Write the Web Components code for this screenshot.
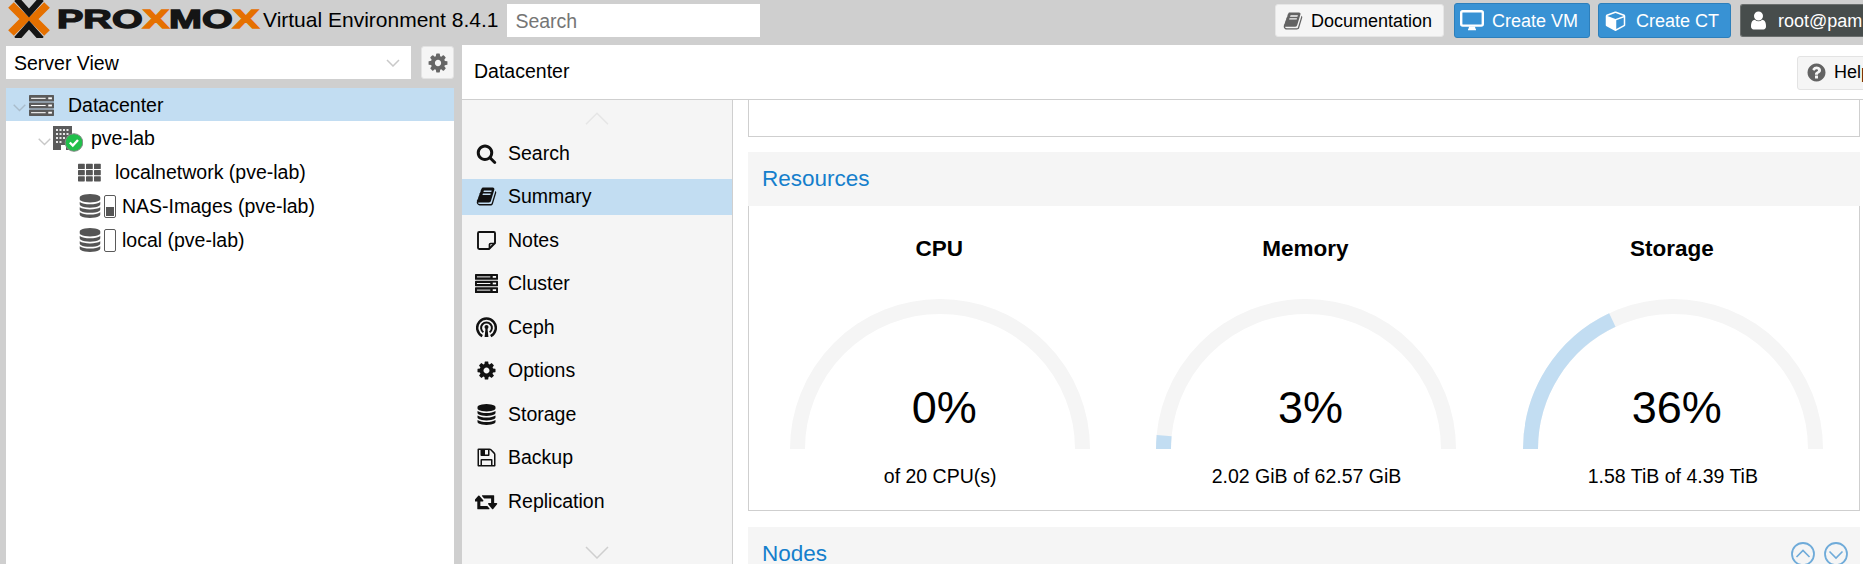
<!DOCTYPE html>
<html lang="en">
<head>
<meta charset="utf-8">
<title>Proxmox Virtual Environment</title>
<style>
  html, body { margin: 0; width: 1863px; height: 564px; overflow: hidden; background: #cfcfcf; }
  body { font: 19.5px "Liberation Sans", Arial, sans-serif; color: #000; }
</style>
</head>
<body>
<pve-app>
  <pve-topbar slot="top">
    <pve-logo></pve-logo>
    <pve-version>Virtual Environment 8.4.1</pve-version>
    <pve-search>Search</pve-search>
    <pve-button icon="book" variant="plain" style="--pl:7px;--gap:8px;--w:169px;--is:20px">Documentation</pve-button>
    <pve-button icon="desktop" variant="blue" style="--pl:5px;--gap:8px;--w:136px;--is:24px;margin-left:1px">Create VM</pve-button>
    <pve-button icon="cube" variant="blue" style="--pl:6px;--gap:10px;--w:133px;--is:21px;margin-left:-1px">Create CT</pve-button>
    <pve-button icon="user" variant="dark" style="--pl:7px;--gap:9px;--w:123px;--is:21px">root@pam</pve-button>
  </pve-topbar>

  <pve-sidebar slot="side">
    <pve-viewbar>Server View</pve-viewbar>
    <pve-tree>
      <pve-tree-row selected style="--pad:7px;--tx:14px">
        <pve-chev></pve-chev><pve-icon name="server" style="--s:25px;--c:#5a5a5a;margin-left:3px;margin-top:1px"></pve-icon>
        <span>Datacenter</span>
      </pve-tree-row>
      <pve-tree-row style="--pad:32px;--tx:8px">
        <pve-chev></pve-chev><pve-node-icon style="margin-left:2px;margin-top:1px"></pve-node-icon>
        <span>pve-lab</span>
      </pve-tree-row>
      <pve-tree-row style="--pad:71px;--tx:13px">
        <pve-icon name="th" style="--s:25px;--c:#555"></pve-icon>
        <span>localnetwork (pve-lab)</span>
      </pve-tree-row>
      <pve-tree-row style="--pad:72px;--tx:6px">
        <pve-icon name="database" style="--s:24px;--c:#555"></pve-icon><pve-level value="9" style="margin-left:2px"></pve-level>
        <span>NAS-Images (pve-lab)</span>
      </pve-tree-row>
      <pve-tree-row style="--pad:72px;--tx:6px">
        <pve-icon name="database" style="--s:24px;--c:#555"></pve-icon><pve-level value="0" style="margin-left:2px"></pve-level>
        <span>local (pve-lab)</span>
      </pve-tree-row>
    </pve-tree>
  </pve-sidebar>

  <pve-content slot="main">
    <pve-crumb>Datacenter</pve-crumb>
    <pve-split>
      <pve-menu>
        <pve-menu-item icon="search">Search</pve-menu-item>
        <pve-menu-item icon="book" selected>Summary</pve-menu-item>
        <pve-menu-item icon="note">Notes</pve-menu-item>
        <pve-menu-item icon="server" wide>Cluster</pve-menu-item>
        <pve-menu-item icon="ceph">Ceph</pve-menu-item>
        <pve-menu-item icon="cog">Options</pve-menu-item>
        <pve-menu-item icon="database">Storage</pve-menu-item>
        <pve-menu-item icon="floppy">Backup</pve-menu-item>
        <pve-menu-item icon="retweet" wide>Replication</pve-menu-item>
      </pve-menu>
      <pve-scroll>
        <pve-stub></pve-stub>
        <pve-panel>
          <span slot="title">Resources</span>
          <pve-gauge title="CPU" pct="0" sub="of 20 CPU(s)"></pve-gauge>
          <pve-gauge title="Memory" pct="3" sub="2.02 GiB of 62.57 GiB"></pve-gauge>
          <pve-gauge title="Storage" pct="36" sub="1.58 TiB of 4.39 TiB"></pve-gauge>
        </pve-panel>
        <pve-panel-head>
          <span>Nodes</span>
          <pve-tool dir="up" slot="tools"></pve-tool>
          <pve-tool dir="down" slot="tools"></pve-tool>
        </pve-panel-head>
      </pve-scroll>
    </pve-split>
  </pve-content>
</pve-app>

<script>
const ICONS = {
  search: ['0 0 1792 1792','<path fill="currentColor" d="M1216 832q0-185-131.5-316.5t-316.5-131.5-316.5 131.5-131.5 316.5 131.5 316.5 316.5 131.5 316.5-131.5 131.5-316.5zm512 832q0 52-38 90t-90 38q-54 0-90-38l-343-342q-179 124-399 124-143 0-273.5-55.5t-225-150-150-225-55.5-273.5 55.5-273.5 150-225 225-150 273.5-55.5 273.5 55.5 225 150 150 225 55.5 273.5q0 220-124 399l343 343q37 37 37 90z"/>'],
  cog: ['0 0 1792 1792','<path fill="currentColor" d="M1152 896q0-106-75-181t-181-75-181 75-75 181 75 181 181 75 181-75 75-181zm512-109v222q0 12-8 23t-20 13l-185 28q-19 54-39 91 35 50 107 138 10 12 10 25t-9 23q-27 37-99 108t-94 71q-12 0-26-9l-138-108q-44 23-91 38-16 136-29 186-7 28-36 28h-222q-14 0-24.5-8.5t-11.5-21.5l-28-184q-49-16-90-37l-141 107q-10 9-25 9-14 0-25-11-126-114-165-168-7-10-7-23 0-12 8-23 15-21 51-66.5t54-70.5q-27-50-41-99l-183-27q-13-2-21-12.5t-8-23.5v-222q0-12 8-23t19-13l186-28q14-46 39-92-40-57-107-138-10-12-10-24 0-10 9-23 26-36 98.5-107.5t94.5-71.5q13 0 26 10l138 107q44-23 91-38 16-136 29-186 7-28 36-28h222q14 0 24.5 8.5t11.5 21.5l28 184q49 16 90 37l142-107q9-9 24-9 13 0 25 10 129 119 165 170 7 8 7 22 0 12-8 23-15 21-51 66.5t-54 70.5q26 50 41 98l183 28q13 2 21 12.5t8 23.5z"/>'],
  book: ['0 0 1792 1792','<path fill="currentColor" d="M1703 478q40 57 18 129l-275 906q-19 64-76.5 107.5t-122.5 43.5h-923q-77 0-148.5-53.5t-99.5-131.5q-24-67-2-127 0-4 3-27t4-37q1-8-3-21.5t-3-19.5q2-11 8-21t16.5-23.5 16.5-23.5q23-38 45-91.5t30-91.5q3-10 .5-30t-.5-28q3-11 17-28t17-23q21-36 42-92t25-90q1-9-2.5-32t.5-28q4-13 22-30.5t22-22.5q19-26 42.5-84.5t27.5-96.5q1-8-3-25.5t-2-26.5q2-8 9-18t18-23 17-21q8-12 16.5-30.5t15-35 16-36 19.5-32 26.5-23.5 36-11.5 47.5 5.5l-1 3q38-9 51-9h761q74 0 114 56t18 130l-274 906q-36 119-71.5 153.5t-128.5 34.5h-869q-27 0-38 15-11 16-1 43 24 70 144 70h923q29 0 56-15.5t35-41.5l300-987q7-22 5-57 38 15 59 43zm-1064 2q-4 13 2 22.5t20 9.5h608q13 0 25.5-9.5t16.5-22.5l21-64q4-13-2-22.5t-20-9.5h-608q-13 0-25.5 9.5t-16.5 22.5zm-83 256q-4 13 2 22.5t20 9.5h608q13 0 25.5-9.5t16.5-22.5l21-64q4-13-2-22.5t-20-9.5h-608q-13 0-25.5 9.5t-16.5 22.5z"/>'],
  database: ['0 0 1792 1792','<path fill="currentColor" d="M896 768q237 0 443-43t325-127v170q0 69-103 128t-280 93.5-385 34.5-385-34.5-280-93.5-103-128v-170q119 84 325 127t443 43zm0 768q237 0 443-43t325-127v170q0 69-103 128t-280 93.5-385 34.5-385-34.5-280-93.5-103-128v-170q119 84 325 127t443 43zm0-384q237 0 443-43t325-127v170q0 69-103 128t-280 93.5-385 34.5-385-34.5-280-93.5-103-128v-170q119 84 325 127t443 43zm0-1152q208 0 385 34.5t280 93.5 103 128v128q0 69-103 128t-280 93.5-385 34.5-385-34.5-280-93.5-103-128v-128q0-69 103-128t280-93.5 385-34.5z"/>'],
  user: ['0 0 1792 1792','<path fill="currentColor" d="M1536 1399q0 109-62.5 187t-150.5 78h-854q-88 0-150.5-78t-62.5-187q0-85 8.5-160.5t31.5-152 58.5-131 94-89 134.5-34.5q131 128 313 128t313-128q76 0 134.5 34.5t94 89 58.5 131 31.5 152 8.5 160.5zm-256-887q0 159-112.5 271.5t-271.5 112.5-271.5-112.5-112.5-271.5 112.5-271.5 271.5-112.5 271.5 112.5 112.5 271.5z"/>'],
  cube: ['0 0 1664 1792','<path fill="currentColor" d="M896 1629l640-349v-636l-640 233v752zm-64-865l698-254-698-254-698 254zm832-252v768q0 35-18 65t-49 47l-704 384q-28 16-61 16t-61-16l-704-384q-31-17-49-47t-18-65v-768q0-40 23-73t61-47l704-256q22-8 44-8t44 8l704 256q38 14 61 47t23 73z"/>'],
  help: ['0 0 1792 1792','<path fill="currentColor" d="M1024 1376v-192q0-14-9-23t-23-9h-192q-14 0-23 9t-9 23v192q0 14 9 23t23 9h192q14 0 23-9t9-23zm256-672q0-88-55.5-163t-138.5-116-170-41q-243 0-371 213-15 24 8 42l132 100q7 6 19 6 16 0 25-12 53-68 86-92 34-24 86-24 48 0 85.5 26t37.5 59q0 38-20 61t-68 45q-63 28-115.5 86.5t-52.5 125.5v36q0 14 9 23t23 9h192q14 0 23-9t9-23q0-19 21.5-49.5t54.5-49.5q32-18 49-28.5t46-35 44.5-48 28-60.5 12.5-81zm384 192q0 209-103 385.5t-279.5 279.5-385.5 103-385.5-103-279.5-279.5-103-385.5 103-385.5 279.5-279.5 385.5-103 385.5 103 279.5 279.5 103 385.5z"/>'],
  floppy: ['0 0 1792 1792','<path fill="currentColor" d="M512 1536h768v-384h-768v384zm896 0h128v-896q0-14-10-38.5t-20-34.5l-281-281q-10-10-34-20t-39-10v416q0 40-28 68t-68 28h-576q-40 0-68-28t-28-68v-416h-128v1280h128v-416q0-40 28-68t68-28h832q40 0 68 28t28 68v416zm-384-928v-320q0-13-9.5-22.5t-22.5-9.5h-192q-13 0-22.5 9.5t-9.5 22.5v320q0 13 9.5 22.5t22.5 9.5h192q13 0 22.5-9.5t9.5-22.5zm640 32v928q0 40-28 68t-68 28h-1344q-40 0-68-28t-28-68v-1344q0-40 28-68t68-28h928q40 0 88 20t76 48l280 280q28 28 48 76t20 88z"/>'],
  retweet: ['0 0 1920 1792','<path fill="currentColor" d="M1216 1504q0 13-9.5 22.5t-22.5 9.5h-960q-8 0-13.5-2t-9-7-5.5-8-3-11.5-1-11.5v-600h-192q-26 0-45-19t-19-45q0-24 15-41l320-384q19-22 49-22t49 22l320 384q15 17 15 41 0 26-19 45t-45 19h-192v384h576q16 0 25 11l160 192q7 10 7 21zm640-416q0 24-15 41l-320 384q-20 23-49 23t-49-23l-320-384q-15-17-15-41 0-26 19-45t45-19h192v-384h-576q-16 0-25-12l-160-192q-7-9-7-20 0-13 9.5-22.5t22.5-9.5h960q8 0 13.5 2t9 7 5.5 8 3 11.5 1 11.5v600h192q26 0 45 19t19 45z"/>'],
  desktop: ['0 0 24 22','<rect x="1.2" y="1.2" width="21.6" height="14.4" rx="1.5" fill="none" stroke="currentColor" stroke-width="2.4"/><path fill="currentColor" d="M9 16.500h6c0 1.400.8 2.300 1 3v.8H8v-.8c.3-.7 1-1.600 1-3z"/>'],
  note: ['0 0 21 21','<path fill="none" stroke="currentColor" stroke-width="1.9" d="M3.2 2h14.6c.7 0 1.2.5 1.2 1.2V13l-6 6H3.2C2.500 19 2 18.500 2 17.800V3.200C2 2.500 2.500 2 3.200 2z"/><path fill="none" stroke="currentColor" stroke-width="1.7" d="M18.500 13.500h-4a1 1 0 0 0-1 1v4"/>'],
  server: ['0 0 24 22','<g fill="currentColor"><rect x="0" y="1" width="24" height="6.200" rx=".6"/><rect x="0" y="8.200" width="24" height="5.600" rx=".6"/><rect x="0" y="14.800" width="24" height="6.200" rx=".6"/></g><g fill="#fff"><rect x="2" y="3.600" width="14" height="1"/><rect x="18.500" y="3.200" width="3.500" height="1.800"/><rect x="2" y="10.500" width="14" height="1"/><rect x="18.500" y="10.100" width="3.500" height="1.800"/><rect x="2" y="17.400" width="14" height="1"/><rect x="18.500" y="17" width="3.500" height="1.800"/></g>'],
  th: ['0 0 25 21','<g fill="currentColor"><rect x="1" y="1.800" width="6.800" height="5.200" rx=".6"/><rect x="9" y="1.800" width="6.800" height="5.200" rx=".6"/><rect x="17" y="1.800" width="6.800" height="5.200" rx=".6"/><rect x="1" y="8" width="6.800" height="5.200" rx=".6"/><rect x="9" y="8" width="6.800" height="5.200" rx=".6"/><rect x="17" y="8" width="6.800" height="5.200" rx=".6"/><rect x="1" y="14.200" width="6.800" height="5.200" rx=".6"/><rect x="9" y="14.200" width="6.800" height="5.200" rx=".6"/><rect x="17" y="14.200" width="6.800" height="5.200" rx=".6"/></g>'],
  ceph: ['0 0 21 21','<g fill="none" stroke="currentColor"><path stroke-width="2.500" d="M6.300 19.200a9.300 9.300 0 1 1 8.400 0"/><path stroke-width="2" d="M7.400 15.300a5.400 5.400 0 1 1 6.200 0"/></g><path fill="currentColor" d="M8.600 20l1-9.500a1 1 0 0 1 1.800 0l1 9.500z"/><circle cx="10.500" cy="10" r="2" fill="currentColor"/>']
};

function define(name, html, setup) {
  customElements.define(name, class extends HTMLElement {
    constructor() {
      super();
      this.attachShadow({ mode: 'open' }).innerHTML = typeof html === 'function' ? html(this) : html;
    }
    connectedCallback() { if (setup) setup(this, this.shadowRoot); }
  });
}

define('pve-icon', `<style>
  :host { display: inline-flex; width: var(--s, 21px); height: var(--s, 21px); color: var(--c, currentColor); flex: none; align-items: center; justify-content: center; }
  svg { width: 100%; height: 100%; display: block; }
</style><svg></svg>`, (el, root) => {
  const [vb, body] = ICONS[el.getAttribute('name')];
  const svg = root.querySelector('svg');
  svg.setAttribute('viewBox', vb);
  svg.innerHTML = body;
});

define('pve-app', `<style>
  :host { display: grid; grid-template-rows: 45px 519px; grid-template-columns: 462px 1401px; width: 1863px; height: 564px; overflow: hidden; background: #cfcfcf; }
  ::slotted([slot=top]) { grid-column: 1 / 3; }
</style><slot name="top"></slot><slot name="side"></slot><slot name="main"></slot>`);

define('pve-topbar', `<style>
  :host { display: flex; align-items: center; gap: 9px; background: #cfcfcf; height: 45px; overflow: hidden; }
  ::slotted(pve-search) { margin-right: auto; }
</style><slot></slot>`);

define('pve-logo', `<style>
  :host { display: flex; align-items: center; width: 258px; height: 45px; flex: none; margin-right: -4px; padding-left: 8px; box-sizing: border-box; align-self: flex-start; }
  svg { width: 42px; height: 38px; flex: none; display: block; margin-top: -7px; }
  .w { display: block; width: 133px; margin-left: 7px; margin-top: -8px; font: bold 26px/30px "Liberation Sans", Arial, sans-serif; color: #151515; -webkit-text-stroke: 1.3px #151515; transform: scaleX(1.52); transform-origin: 0 50%; white-space: nowrap; }
  b { color: #e57000; -webkit-text-stroke: 1.3px #e57000; font-weight: bold; }
</style>
<svg viewBox="0 0 42 38">
  <g fill="none" stroke-linejoin="miter">
    <path stroke="#e57000" stroke-width="8" d="M3 5 L17 19 L3 33"/>
    <path stroke="#e57000" stroke-width="8" d="M39 5 L25 19 L39 33"/>
    <path stroke="#151515" stroke-width="6" d="M8.500 -1 L21 13 L33.500 -1"/>
    <path stroke="#151515" stroke-width="6" d="M8.500 39 L21 25 L33.500 39"/>
  </g>
</svg>
<span class="w">PRO<b>X</b>MO<b>X</b></span>`);

define('pve-version', `<style>
  :host { display: block; font-size: 21px; flex: none; margin-left: 0; margin-top: -5px; white-space: nowrap; }
</style><slot></slot>`);

define('pve-search', `<style>
  :host { display: flex; align-items: center; flex: none; width: 253px; height: 33px; box-sizing: border-box; padding: 2px 0 0 8px; background: #fff; color: #757575; font-size: 19.5px; margin-left: 0; margin-top: -4px; }
</style><slot></slot>`);

define('pve-button', (el) => `<style>
  :host { display: flex; align-items: center; flex: none; box-sizing: border-box; width: var(--w); height: 33px; padding-left: var(--pl); gap: var(--gap); font-size: 18px; border-radius: 3px; white-space: nowrap; margin-top: -4px; }
  :host([variant=plain]) { background: #f5f5f5; border: 1px solid #e6e6e6; color: #000; --ic: #636363; }
  :host([variant=blue]) { background: #3892d4; border: 1px solid #2d7fbb; color: #fff; --ic: #fff; height: 35px; margin-top: -4px; }
  :host([variant=dark]) { background: #474d4c; border: 1px solid #6a6e6d; border-right: 0; border-radius: 3px 0 0 3px; color: #fff; --ic: #fff; }
  span { padding-top: 1px; }
</style><pve-icon name="${el.getAttribute('icon')}" style="--s:var(--is);--c:var(--ic)"></pve-icon><span><slot></slot></span>`);

define('pve-sidebar', `<style>
  :host { display: flex; flex-direction: column; box-sizing: border-box; width: 462px; height: 519px; padding: 1px 8px 0 6px; gap: 9px; background: #cfcfcf; }
</style><slot></slot>`);

define('pve-viewbar', `<style>
  :host { display: flex; gap: 10px; height: 33px; flex: none; }
  .sel { flex: 1; background: #fff; display: flex; align-items: center; justify-content: space-between; padding: 0 11px 0 9px; }
  .sel span { padding-top: 1px; margin-left: -1px; }
  svg.ch { width: 14px; height: 8px; }
  .gear { width: 33px; box-sizing: border-box; background: #f5f5f5; border: 1px solid #e3e3e3; border-radius: 3px; display: flex; align-items: center; justify-content: center; }
</style>
<div class="sel"><span><slot></slot></span>
  <svg class="ch" viewBox="0 0 14 8"><path d="M1 1l6 6 6-6" fill="none" stroke="#c9c9c9" stroke-width="1.500"/></svg></div>
<div class="gear"><pve-icon name="cog" style="--s:22px;--c:#666"></pve-icon></div>`);

define('pve-tree', `<style>
  :host { display: block; flex: 1; background: #fff; }
</style><slot></slot>`);

define('pve-tree-row', `<style>
  :host { display: flex; align-items: center; height: 34px; box-sizing: border-box; padding-left: var(--pad); white-space: nowrap; }
  :host([selected]) { background: #c2ddf2; height: 33px; --ch: #a9bccb; }
  ::slotted(span) { margin-left: var(--tx); margin-top: 1px; }
</style><slot></slot>`);

define('pve-chev', `<style>
  :host { display: block; flex: none; width: 13px; height: 8px; margin-top: 7px; }
  svg { display: block; width: 13px; height: 8px; }
  path { stroke: var(--ch, #c8c8c8); }
</style><svg viewBox="0 0 13 8"><path d="M.7.7l5.800 5.800L12.300.7" fill="none" stroke-width="1.400"/></svg>`);

define('pve-node-icon', `<style>
  :host { display: block; flex: none; width: 30px; height: 26px; }
  svg { display: block; }
</style><svg width="30" height="26" viewBox="0 0 30 26">
  <rect x="0" y="0" width="19" height="24" fill="#5b5b5b"/>
  <g fill="#e6e6e6">
    <rect x="3" y="3" width="2" height="2"/><rect x="6.500" y="3" width="2" height="2"/><rect x="10" y="3" width="2" height="2"/><rect x="13.500" y="3" width="2" height="2"/>
    <rect x="3" y="7" width="2" height="2"/><rect x="6.500" y="7" width="2" height="2"/><rect x="10" y="7" width="2" height="2"/><rect x="13.500" y="7" width="2" height="2"/>
    <rect x="3" y="11" width="2" height="2"/><rect x="6.500" y="11" width="2" height="2"/><rect x="10" y="11" width="2" height="2"/>
    <rect x="3" y="15" width="2" height="2"/><rect x="6.500" y="15" width="2" height="2"/>
    <rect x="8" y="19" width="5" height="5" fill="#fff"/>
  </g>
  <circle cx="21" cy="16.500" r="8.800" fill="#21bf4b" stroke="#8a8a8a" stroke-width="1"/>
  <path d="M16.800 16.500l3 3 5.200-5.500" fill="none" stroke="#fff" stroke-width="2.400"/>
</svg>`);

define('pve-level', (el) => `<style>
  :host { flex: none; width: 12px; height: 23px; box-sizing: border-box; border: 1px solid #5a5a5a; border-radius: 2px; background: #fff; padding: 1px; display: flex; align-items: flex-end; }
  i { display: block; width: 100%; height: ${el.getAttribute('value')}px; background: #555; }
</style><i></i>`);

define('pve-content', `<style>
  :host { display: flex; flex-direction: column; background: #fff; width: 1401px; height: 519px; overflow: hidden; }
</style><slot></slot>`);

define('pve-crumb', `<style>
  :host { display: flex; align-items: center; justify-content: space-between; height: 54px; box-sizing: content-box; border-bottom: 1px solid #cfcfcf; flex: none; padding-left: 12px; background: #fff; }
  .help { display: flex; align-items: center; gap: 7px; height: 34px; width: 90px; box-sizing: border-box; margin-top: 1px; padding-left: 8px; font-size: 18px; background: #f5f5f5; border: 1px solid #e3e3e3; border-radius: 3px 0 0 3px; margin-right: -24px; }
</style><span style="margin-top:-1px"><slot></slot></span>
<div class="help"><pve-icon name="help" style="--s:21px;--c:#636363"></pve-icon>Help</div>`);

define('pve-split', `<style>
  :host { display: flex; flex: 1; min-height: 0; }
</style><slot></slot>`);

define('pve-menu', `<style>
  :host { display: flex; flex-direction: column; flex: none; box-sizing: border-box; width: 271px; height: 464px; background: #f5f5f5; border-right: 1px solid #cfcfcf; }
  .arrow { display: flex; justify-content: center; align-items: center; flex: none; }
  .up { height: 35px; padding-top: 1px; box-sizing: border-box; }
  .down { height: 45px; padding-top: 21px; box-sizing: border-box; }
  svg { width: 24px; height: 13px; display: block; }
  .items { display: flex; flex-direction: column; gap: 7.500px; }
</style>
<div class="arrow up"><svg viewBox="0 0 24 13"><path d="M1 12.300L12 1.300l11 11" fill="none" stroke="#e6e6e6" stroke-width="1.500"/></svg></div>
<div class="items"><slot></slot></div>
<div class="arrow down"><svg viewBox="0 0 24 13"><path d="M1 1l11 11L23 1" fill="none" stroke="#cfcfcf" stroke-width="1.500"/></svg></div>`);

define('pve-menu-item', (el) => `<style>
  :host { display: flex; align-items: center; height: 36px; padding-left: 14px; gap: 12px; }
  :host([selected]) { background: #c2ddf2; }
  pve-icon { --s: 21px; --c: #111; }
  :host([wide]) pve-icon { --s: 23px; margin: 0 -1px; }
  span { margin-left: -1px; }
</style><pve-icon name="${el.getAttribute('icon')}"></pve-icon><span><slot></slot></span>`);

define('pve-scroll', `<style>
  :host { display: flex; flex-direction: column; flex: 1; min-width: 0; padding: 0 3px 0 15px; gap: 15px; overflow: hidden; }
</style><slot></slot>`);

define('pve-stub', `<style>
  :host { display: block; flex: none; height: 37px; box-sizing: border-box; border: 1px solid #cfcfcf; border-top: 0; }
</style>`);

define('pve-panel', `<style>
  :host { display: block; flex: none; }
  .head { height: 54px; background: #f5f5f5; display: flex; align-items: center; padding-left: 15px; color: #157fcc; font-size: 22.500px; }
  .body { display: grid; grid-template-columns: repeat(3, 1fr); box-sizing: border-box; height: 305px; padding: 29px 3px 0 8px; border: 1px solid #cfcfcf; border-top: 0; }
  ::slotted(span) { margin-left: -1px; }
</style><div class="head"><slot name="title"></slot></div><div class="body"><slot></slot></div>`);

define('pve-panel-head', `<style>
  :host { display: flex; align-items: center; flex: none; height: 54px; background: #f5f5f5; padding: 0 12px 0 15px; color: #157fcc; font-size: 22.500px; line-height: 20px; margin-top: 1px; }
  .t { display: flex; gap: 9px; margin-left: auto; }
  ::slotted(span) { margin-left: -1px; margin-top: -1px; }
</style><slot></slot><div class="t"><slot name="tools"></slot></div>`);

define('pve-tool', (el) => `<style>
  :host { display: block; width: 24px; height: 24px; }
  svg { display: block; }
</style><svg width="24" height="24" viewBox="0 0 24 24" fill="none" stroke="#6fabd9" stroke-width="1.800">
  <circle cx="12" cy="12" r="11"/>
  <path stroke-width="1.600" d="${el.getAttribute('dir') === 'up' ? 'M5.500 15L12 8.500 18.500 15' : 'M5.500 9.500L12 16l6.500-6.500'}"/>
</svg>`);

define('pve-gauge', (el) => {
  const p = el.getAttribute('pct');
  return `<style>
  :host { display: flex; flex-direction: column; align-items: center; }
  .t { font: bold 22.500px/26px "Liberation Sans", Arial, sans-serif; margin: 1px 2px 37px 0; }
  .g { display: grid; width: 300px; height: 150px; justify-items: center; }
  .g > * { grid-area: 1 / 1; }
  svg { display: block; }
  .p { font-size: 45px; line-height: 45px; align-self: end; margin: 0 0 19px 8px; }
  .s { line-height: 24px; margin-top: 15px; white-space: nowrap; }
</style>
<div class="t">${el.getAttribute('title')}</div>
<div class="g">
  <svg width="300" height="150" viewBox="0 0 300 150" fill="none" stroke-width="15">
    <path stroke="#f5f5f5" d="M7.500 150A142.500 142.500 0 0 1 292.500 150"/>
    ${p > 0 ? `<path stroke="#c2ddf2" pathLength="100" stroke-dasharray="${p} 100" d="M7.500 150A142.500 142.500 0 0 1 292.500 150"/>` : ''}
  </svg>
  <div class="p">${p}%</div>
</div>
<div class="s">${el.getAttribute('sub')}</div>`;
});
</script>
</body>
</html>
